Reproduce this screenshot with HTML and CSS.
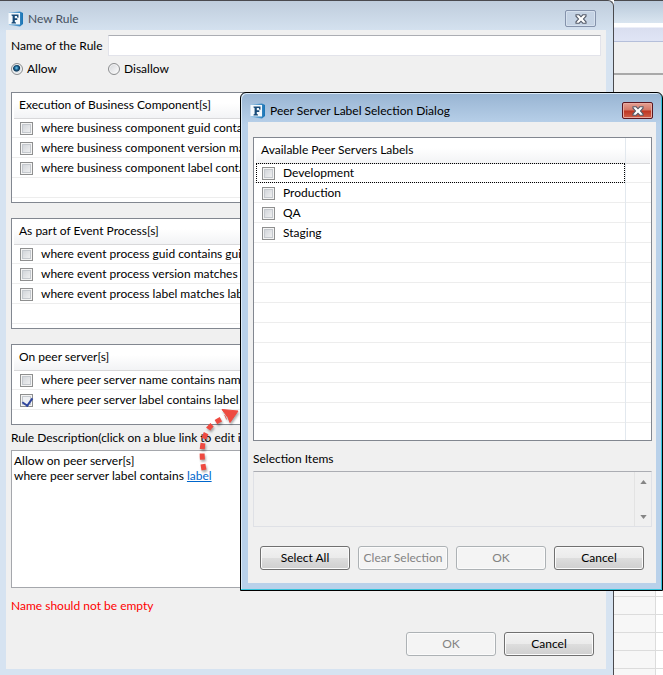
FILE: index.html
```html
<!DOCTYPE html>
<html lang="en">
<head>
<meta charset="utf-8">
<title>New Rule</title>
<link rel="stylesheet" href="styles.css">
</head>
<body>
<svg class="defs" aria-hidden="true">
  <defs>
    <linearGradient id="logo-edge" x1="0" y1="0" x2="1" y2="0">
      <stop offset="0" stop-color="#9cc8e8"/>
      <stop offset="1" stop-color="#1773b5"/>
    </linearGradient>
    <symbol id="logo" viewBox="0 0 16 16">
      <path d="M1 1.5 L12 0.5 L15 2 V13 L12 15.5 L1 14Z" fill="url(#logo-edge)"/>
      <path d="M0.5 2 L12 2 V13.5 L0.5 13Z" fill="#f4f9fd"/>
      <path d="M3.5 3.5h7v3.2h-1.1l-.5-1.6H6.8v2.2h2.5v1.6H6.8v2.2l1.2.4v1H3.5v-1l1.1-.4V5L3.5 4.6Z" fill="#174a78"/>
    </symbol>
    <symbol id="cross" viewBox="0 0 12 10">
      <path d="M1 .8h3.2L6 2.8 7.8.8H11v1.4L8.5 5 11 7.8v1.4H7.8L6 7.2 4.2 9.2H1V7.8L3.5 5 1 2.2Z" fill="#fff" stroke="#535a68" stroke-width="1.1"/>
    </symbol>
  </defs>
</svg>
<div class="desktop">
  <main class="window">
    <header class="titlebar">
      <svg class="logo" aria-hidden="true"><use href="#logo"/></svg>
      <h1 class="title">New Rule</h1>
      <button class="close" type="button" aria-label="Close"><svg class="cross"><use href="#cross"/></svg></button>
    </header>
    <form class="pane">
      <div class="name-row">
        <label for="name">Name of the Rule</label>
        <input class="text-box" id="name" type="text">
      </div>
      <div class="radio-row">
        <label class="option"><input class="radio" type="radio" name="mode" checked>Allow</label>
        <label class="option"><input class="radio" type="radio" name="mode">Disallow</label>
      </div>
      <div class="list tall">
        <table class="grid">
          <thead><tr><th>Execution of Business Component[s]</th></tr></thead>
          <tbody>
            <tr><td><label class="check"><input class="box" type="checkbox">where business component guid contains</label></td></tr>
            <tr><td><label class="check"><input class="box" type="checkbox">where business component version matches</label></td></tr>
            <tr><td><label class="check"><input class="box" type="checkbox">where business component label contains</label></td></tr>
          </tbody>
        </table>
      </div>
      <div class="list tall">
        <table class="grid">
          <thead><tr><th>As part of Event Process[s]</th></tr></thead>
          <tbody>
            <tr><td><label class="check"><input class="box" type="checkbox">where event process guid contains guid</label></td></tr>
            <tr><td><label class="check"><input class="box" type="checkbox">where event process version matches</label></td></tr>
            <tr><td><label class="check"><input class="box" type="checkbox">where event process label matches label</label></td></tr>
          </tbody>
        </table>
      </div>
      <div class="list short">
        <table class="grid">
          <thead><tr><th>On peer server[s]</th></tr></thead>
          <tbody>
            <tr><td><label class="check"><input class="box" type="checkbox">where peer server name contains name</label></td></tr>
            <tr><td><label class="check"><input class="box" type="checkbox" checked>where peer server label contains label</label></td></tr>
          </tbody>
        </table>
      </div>
      <h2 class="caption">Rule Description(click on a blue link to edit it)</h2>
      <div class="description">
        <p>Allow on peer server[s]</p>
        <p>where peer server label contains <a href="#labels">label</a></p>
      </div>
      <p class="error">Name should not be empty</p>
      <div class="actions end">
        <button class="button" type="button" disabled>OK</button>
        <button class="button" type="button">Cancel</button>
      </div>
    </form>
  </main>
  <aside class="backdrop">
    <div class="back-title"></div>
    <div class="back-menu"></div>
    <div class="back-tools"></div>
    <div class="back-sheet"></div>
  </aside>

  <section class="dialog" id="labels" role="dialog" aria-labelledby="dialog-title">
    <header class="titlebar">
      <svg class="logo" aria-hidden="true"><use href="#logo"/></svg>
      <h2 class="title" id="dialog-title">Peer Server Label Selection Dialog</h2>
      <button class="close red" type="button" aria-label="Close"><svg class="cross"><use href="#cross"/></svg></button>
    </header>
    <form class="pane">
      <div class="list labels">
        <table class="grid">
          <thead><tr><th>Available Peer Servers Labels</th><th class="spare"></th></tr></thead>
          <tbody>
            <tr><td class="focused"><label class="check"><input class="box" type="checkbox">Development</label></td><td></td></tr>
            <tr><td><label class="check"><input class="box" type="checkbox">Production</label></td><td></td></tr>
            <tr><td><label class="check"><input class="box" type="checkbox">QA</label></td><td></td></tr>
            <tr><td><label class="check"><input class="box" type="checkbox">Staging</label></td><td></td></tr>
          </tbody>
        </table>
        <div class="column-rule"></div>
      </div>
      <label class="caption" for="items">Selection Items</label>
      <div class="items">
        <textarea class="items-text" id="items" readonly></textarea>
        <div class="scrollbar" aria-hidden="true">
          <svg class="tick" viewBox="0 0 8 5"><path d="M0 5 4 0 8 5Z"/></svg>
          <svg class="tick" viewBox="0 0 8 5"><path d="M0 0 4 5 8 0Z"/></svg>
        </div>
      </div>
      <div class="actions">
        <button class="button" type="button">Select All</button>
        <button class="button" type="button" disabled>Clear Selection</button>
        <button class="button" type="button" disabled>OK</button>
        <button class="button" type="button">Cancel</button>
      </div>
    </form>
  </section>

  <svg class="arrow" viewBox="0 0 48 72" aria-hidden="true">
    <path d="M10 70C7 55 7 40 15 28Q20 22 32 17" fill="none" stroke="#ee4a40" stroke-width="5" stroke-dasharray="6 4.5"/>
    <path d="M28 9.5 44 11 36 22.5 34 17.5Z" fill="#ee4a40" stroke="#ee4a40"/>
  </svg>
</div>
</body>
</html>
```
FILE: styles.css
```css
* { box-sizing: border-box; }

body {
  margin: 0;
  font: 12px/16px Lato, "Open Sans", sans-serif;
  color: #000;
}

h1, h2, p { margin: 0; font: inherit; }
input, textarea, button { margin: 0; font: inherit; color: inherit; }

.defs { position: absolute; width: 0; height: 0; }

.desktop {
  position: relative;
  display: grid;
  grid-template-columns: 1fr 49px;
  min-height: 100vh;
  overflow: hidden;
}

/* Windows */
.window {
  display: flex;
  flex-direction: column;
  min-width: 0;
  padding: 0 7px 6px 6px;
  border: solid #4a4a4e;
  border-width: 1px 1px 0 0;
  border-top-right-radius: 6px;
  background: linear-gradient(#bfcddc, #d6e3f1 32px);
}

.titlebar {
  display: flex;
  align-items: center;
  height: 29px;
  padding: 6px 10px 0 2px;
}

.logo { width: 16px; height: 16px; margin-right: 4px; }
.title { flex: 1; color: #45505e; }

.close {
  display: flex;
  align-items: center;
  justify-content: center;
  width: 31px;
  height: 17px;
  padding: 0;
  border: 1px solid #8492ab;
  border-radius: 2px;
  background: #c5d3e4;
  box-shadow: inset 0 0 0 1px #d6e1ee;
}

.close.red {
  border-color: #5b1720;
  background: linear-gradient(#e5a093, #d37766 48%, #bd3522 52%, #d0604a);
  box-shadow: inset 0 0 0 1px #e9aaa0;
}

.cross { flex: none; width: 12px; height: 10px; }

.pane {
  flex: 1;
  padding: 5px;
  background: #f0f0f0;
}

/* Rule form */
.name-row { display: flex; align-items: center; gap: 4px; }
.name-row label { width: 93px; white-space: nowrap; }

.text-box {
  flex: 1;
  min-width: 0;
  height: 21px;
  border: 1px solid #e2e3ea;
  border-top-color: #abadb3;
  background: #fff;
}

.radio-row { display: flex; margin: 5px 0 15px; }
.option { display: flex; align-items: center; gap: 4px; width: 97px; }

.radio {
  appearance: none;
  width: 12px;
  height: 12px;
  border: 1px solid #8b8d8f;
  border-radius: 50%;
  background: linear-gradient(135deg, #d2d4d8, #fff);
  box-shadow: inset 0 0 0 1px #f4f4f4;
}

.radio:checked {
  background: radial-gradient(circle at 45% 40%, #7ad0f5, #17608f 24%, #0e3656 38%, #dfe6ea 50%);
}

.list {
  margin-bottom: 15px;
  padding: 0 1px 0 2px;
  border: 1px solid #828790;
  background: #fff;
}

.tall { height: 111px; }
.short { height: 81px; margin-bottom: 5px; }

.tall, .short {
  background: repeating-linear-gradient(#fff 0 19px, #ededed 19px 20px) 0 25px / 100% 80px no-repeat #fff;
}

.short { background-size: 100% 40px; }

.grid { width: 100%; border-collapse: collapse; table-layout: fixed; }

.grid th {
  height: 25px;
  padding: 0 5px;
  border-bottom: 1px solid #d8d8da;
  background: linear-gradient(#fff 40%, #f2f3f5);
  font-weight: 400;
  text-align: left;
}

.grid td { height: 20px; padding: 0 6px; overflow: hidden; }

.check { display: flex; align-items: center; gap: 8px; white-space: nowrap; }

.box {
  appearance: none;
  position: relative;
  flex: none;
  width: 13px;
  height: 13px;
  border: 1px solid #8e8f8f;
  background: linear-gradient(135deg, #cbcfd5, #f6f6f6);
  box-shadow: inset 0 0 0 1px #f4f4f4, inset 0 0 0 2px #c4c8cd;
}

.box:checked { background: #eef0f3; }

.box:checked::after {
  content: "";
  position: absolute;
  left: 3px;
  top: 1px;
  width: 5px;
  height: 8px;
  border: solid #31479e;
  border-width: 0 2px 2px 0;
  transform: rotate(35deg);
}

.caption { display: block; }

.description {
  height: 138px;
  margin: 4px 0 10px;
  padding: 2px;
  border: 1px solid #a5a7ac;
  background: #fff;
  line-height: 15px;
}

.description a { color: #0066cc; }
.error { color: #f00; }

.actions { display: flex; gap: 8px; padding: 0 7px; }
.end { justify-content: flex-end; margin-top: 18px; }

.button {
  width: 90px;
  height: 24px;
  padding: 0;
  border: 1px solid #707070;
  border-radius: 3px;
  background: linear-gradient(#f2f2f2, #ebebeb 48%, #dddddd 52%, #cfcfcf);
  box-shadow: inset 0 0 0 1px #fbfbfb;
  white-space: nowrap;
}

.button:disabled {
  border-color: #adb2b5;
  background: #f4f4f4;
  color: #838383;
}

/* Application behind the windows */
.backdrop { display: flex; flex-direction: column; border-top: 1px solid #4a4a4e; background: #f0f0f0; }
.back-title { height: 22px; background: linear-gradient(#b9c9da, #d9e5f0); }
.back-menu { height: 19px; border-bottom: 1px solid #b5bfda; background: linear-gradient(#fff 20%, #d9def0 30%, #e0e5f5); }
.back-tools { height: 33px; border-bottom: 2px solid #a9a9a9; }

.back-sheet {
  flex: 1;
  margin-top: 504px;
  background:
    linear-gradient(#dcdcdc 0 0) 41px 0 / 1px 100% no-repeat,
    repeating-linear-gradient(transparent 0 17px, #dcdcdc 17px 18px),
    linear-gradient(90deg, #f7f7f7 41px, #fff 41px);
}

/* Label selection dialog */
.dialog {
  position: absolute;
  top: 92px;
  left: 240px;
  right: 0;
  padding: 0 6px 7px 7px;
  border: 1px solid #000;
  border-radius: 6px 6px 0 0;
  background: linear-gradient(#98b4d2, #b9d1ea 32px);
  box-shadow: inset -1px -1px #35c4dc, inset 1px 1px #dcebf8;
}

.dialog .title { color: #000; }
.dialog .titlebar { padding-right: 3px; }
.dialog .pane { padding: 15px 4px 13px 5px; }

.labels {
  position: relative;
  height: 304px;
  margin-bottom: 10px;
  background: repeating-linear-gradient(#fff 0 19px, #ededed 19px 20px) 0 25px / 100% 260px no-repeat #fff;
}

.spare { width: 25px; }

.column-rule {
  position: absolute;
  top: 0;
  bottom: 0;
  right: 25px;
  width: 1px;
  background: #e2e8ee;
}

.grid .focused { outline: 1px dotted #000; outline-offset: -1px; }

.items {
  display: flex;
  height: 56px;
  margin: 4px 0 19px;
  border: 1px solid #dfe1e6;
  border-top-color: #abadb3;
}

.items-text { flex: 1; border: 0; padding: 2px; background: transparent; resize: none; outline: 0; }

.scrollbar {
  display: flex;
  flex-direction: column;
  align-items: center;
  justify-content: space-between;
  width: 17px;
  padding: 8px 0 7px;
  border-left: 1px solid #e3e3e3;
}

.tick { width: 7px; height: 4px; fill: #858585; }

.arrow {
  position: absolute;
  left: 194px;
  top: 400px;
  width: 48px;
  height: 72px;
  filter: drop-shadow(1px 2px 1px #0005);
  pointer-events: none;
}
```
